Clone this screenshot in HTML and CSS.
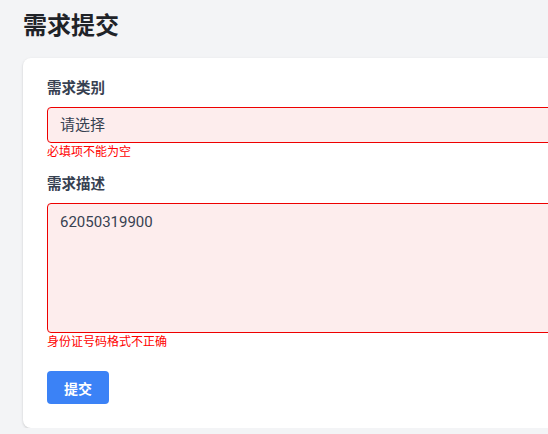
FILE: index.html
```html
<!DOCTYPE html>
<html lang="zh-CN">
<head>
    <meta charset="UTF-8">
    <meta name="viewport" content="width=device-width, initial-scale=1.0">
    <title>需求提交</title>
    <link rel="stylesheet" href="styles.css">
</head>
<body>
    <!-- Titre de la page -->
    <h1 class="page-title">需求提交</h1>

    <!-- Formulaire -->
    <form class="card" id="demandForm">
        <div class="field">
            <label for="category">需求类别</label>
            <div class="select is-error" id="category">请选择</div>
            <p class="error">必填项不能为空</p>
        </div>

        <div class="field">
            <label for="desc">需求描述</label>
            <textarea id="desc" class="textarea is-error">62050319900</textarea>
            <p class="error">身份证号码格式不正确</p>
        </div>

        <button type="submit" class="btn">提交</button>
    </form>
</body>
</html>
```

FILE: styles.css
```css
html {
    overflow: hidden;
}
* {
    box-sizing: border-box;
    font-family: Roboto, "Noto Sans CJK SC", sans-serif;
}
body {
    margin: 0;
    padding: 10px 0 0 23px;
    background-color: #f3f4f6;
    width: 640px;
}

.page-title {
    margin: 0 0 16px;
    font-size: 24px;
    line-height: 32px;
    font-weight: 700;
    color: #1f2328;
}

/* Carte du formulaire */
.card {
    background: #fff;
    border-radius: 8px;
    box-shadow: 0 1px 3px rgba(0, 0, 0, 0.12), 0 1px 2px rgba(0, 0, 0, 0.06);
    padding: 21px 24px 24px;
    width: 620px;
}

.field {
    margin-bottom: 15px;
}
.field label {
    display: block;
    font-size: 14.5px;
    line-height: 20px;
    font-weight: 700;
    color: #374151;
    margin-bottom: 8px;
}

.select,
.textarea {
    display: block;
    width: 100%;
    border: 1px solid #d1d5db;
    border-radius: 4px;
    font-size: 15px;
    color: #374151;
    padding: 0 12px;
}
.select {
    height: 36px;
    line-height: 34px;
}
.textarea {
    height: 130px;
    padding-top: 7px;
    line-height: 22px;
    resize: none;
    outline: none;
}
.is-error {
    border-color: #ee0000;
    background-color: #fdeded;
}

.error {
    margin: 1px 0 0;
    font-size: 12px;
    line-height: 16px;
    color: #ff0000;
}

.btn {
    display: block;
    margin-top: 21px;
    width: 62px;
    height: 33px;
    border: none;
    border-radius: 4px;
    background-color: #3b82f6;
    color: #fff;
    font-size: 14px;
    font-weight: 700;
    cursor: pointer;
}
```
